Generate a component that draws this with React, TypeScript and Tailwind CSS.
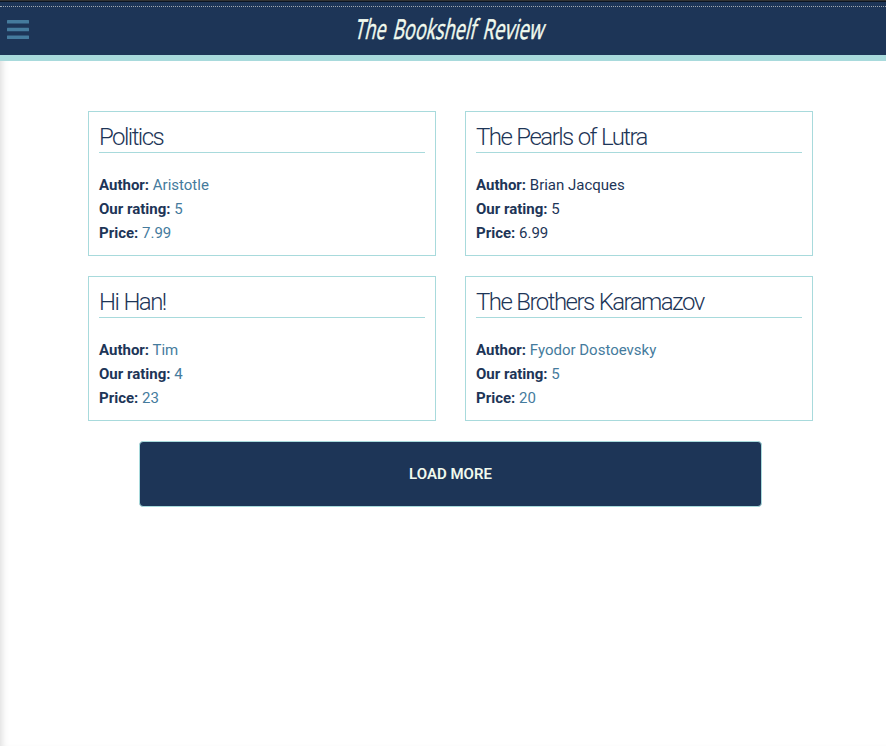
const books = [
  { title: 'Politics', author: 'Aristotle', rating: '5', price: '7.99', color: 'text-[#457b9d]' },
  { title: 'The Pearls of Lutra', author: 'Brian Jacques', rating: '5', price: '6.99', color: 'text-[#1d3557]' },
  { title: 'Hi Han!', author: 'Tim', rating: '4', price: '23', color: 'text-[#457b9d]' },
  { title: 'The Brothers Karamazov', author: 'Fyodor Dostoevsky', rating: '5', price: '20', color: 'text-[#457b9d]' },
];

function Header() {
  return (
    <header className="h-[61px] border-b-[6px] border-[#a8dadc] bg-[#1d3557]">
      <div className="h-[7px] border-b border-dotted border-[#a1a9b0] shadow-[inset_0_1px_0_#333,inset_0_2px_0_#0b1522]" />
      <div className="flex h-[48px] items-center pl-[7px]">
        <svg width="22" height="20" viewBox="0 0 22 20" fill="#457b9d" className="-mt-0.5 shrink-0">
          <rect y="0" width="22" height="3.6" rx="0.5" />
          <rect y="7.7" width="22" height="3.6" rx="0.5" />
          <rect y="15.4" width="22" height="3.6" rx="0.5" />
        </svg>
        <h1 className="ml-[326px] pb-[2px] leading-none text-[#f1faee]">
          <svg width="194" height="34" viewBox="0 0 194 34" fill="currentColor" className="overflow-visible">
            <g transform="translate(-1 26) skewX(-13)" fontSize="27.5" fontWeight="500" fontFamily="Open Sans, sans-serif" stroke="currentColor" strokeWidth="0.5" strokeLinejoin="round">
              <text x="0" textLength="31" lengthAdjust="spacingAndGlyphs">The</text>
              <text x="38" textLength="83" lengthAdjust="spacingAndGlyphs">Bookshelf</text>
              <text x="128" textLength="61" lengthAdjust="spacingAndGlyphs">Review</text>
            </g>
          </svg>
        </h1>
      </div>
    </header>
  );
}

export default function App() {
  return (
    <div className="h-[746px] overflow-hidden bg-white font-[Roboto,sans-serif] text-[#1d3557] shadow-[inset_7px_0_7px_-5px_#ddd]">
      <Header />
      <main className="pl-[88px] pt-[50px]">
        <div className="grid w-[725px] grid-cols-2 gap-x-[29px] gap-y-5">
          {books.map((b) => (
            <article key={b.title} className="h-[145px] border border-[#a8dadc] px-[10px] pt-[10px]">
              <h2 className="h-[31px] border-b border-[#a8dadc] text-[24px] leading-[30px] font-light tracking-[-1.55px] [word-spacing:0.8px]">{b.title}</h2>
              <div className={`pt-5 text-[15px] leading-6 ${b.color}`}>
                <p><strong className="text-[#1d3557]">Author:</strong> {b.author}</p>
                <p><strong className="text-[#1d3557]">Our rating:</strong> {b.rating}</p>
                <p><strong className="text-[#1d3557]">Price:</strong> {b.price}</p>
              </div>
            </article>
          ))}
        </div>
        <button className="mt-5 ml-[51px] block h-[66px] w-[623px] rounded border border-[#a8dadc] bg-[#1d3557] text-[15px] font-semibold text-[#f1faee]">LOAD MORE</button>
      </main>
    </div>
  );
}
